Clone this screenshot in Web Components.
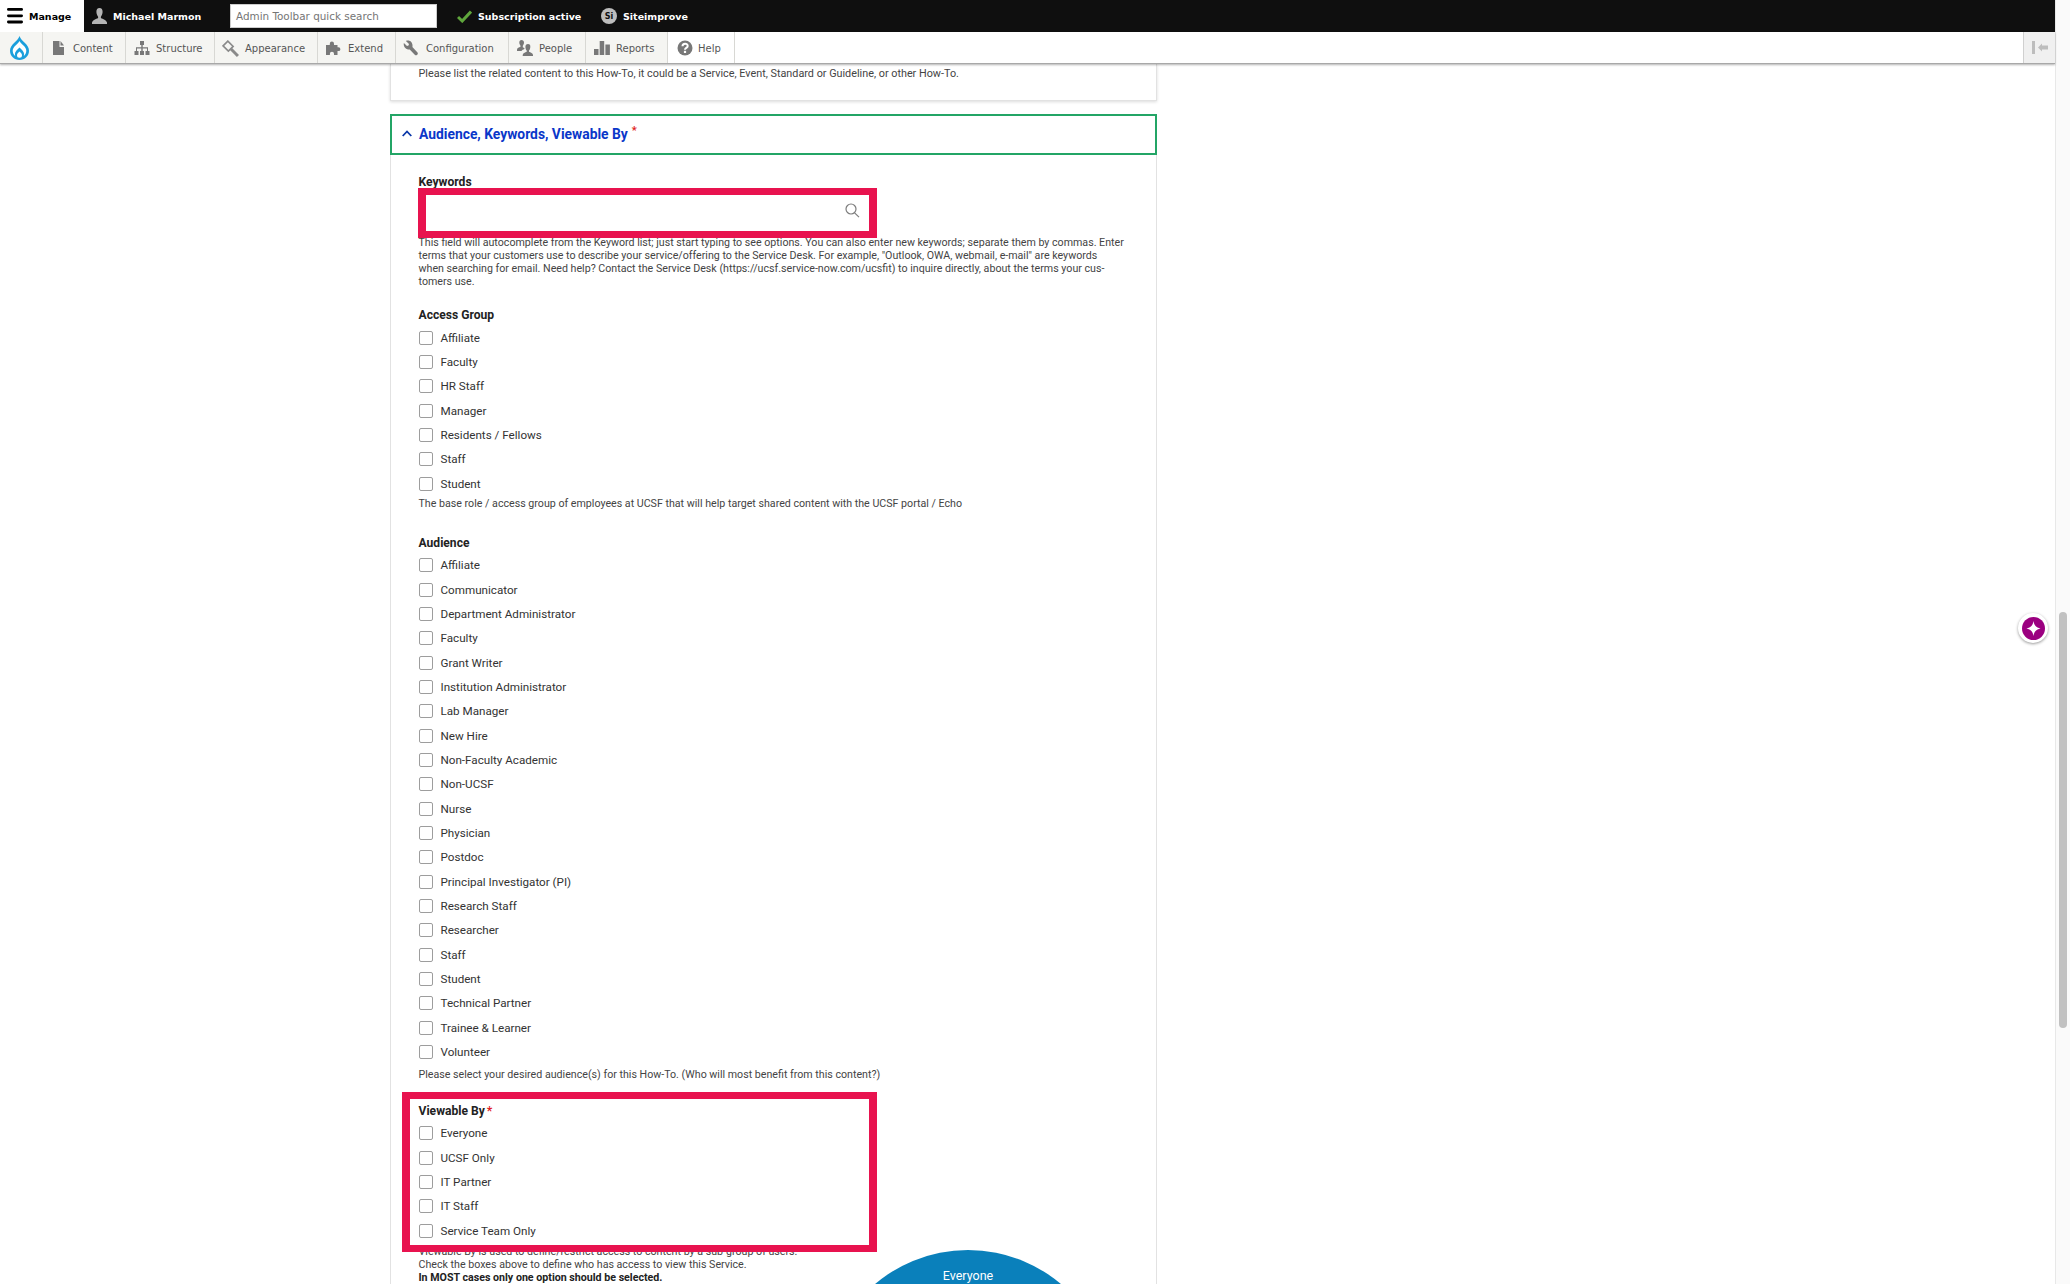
<!DOCTYPE html>
<html>
<head>
<meta charset="utf-8">
<title>Audience, Keywords, Viewable By</title>
<style>
  html, body { margin: 0; height: 100%; overflow: hidden; background: #fff; }
  body { font-family: Roboto, "Liberation Sans", sans-serif; color: #333; }
  svg { display: block; }
</style>
</head>
<body>
<app-shell>
  <admin-toolbar slot="toolbar">
    <bar-tab slot="bar" active style="--w:84px;--pad:7px">
      <svg slot="icon" width="16" height="16" viewBox="0 0 16 16" fill="#000"><rect y="0" width="16" height="2.8" rx="1.4"/><rect y="6.4" width="16" height="2.8" rx="1.4"/><rect y="12.6" width="16" height="2.8" rx="1.4"/></svg>
      Manage
    </bar-tab>
    <bar-tab slot="bar" style="--w:138px;--pad:8px">
      <svg slot="icon" width="15" height="16" viewBox="0 0 15 16" fill="#b4b4b4"><path d="M7.5 0C5.3 0 4.4 1.7 4.4 3.8c0 2 .9 4 1.7 4.9v1.2C4 11 .6 11.8 0 14.6V16h15v-1.4c-.6-2.8-4-3.6-6.1-4.7V8.7c.8-.9 1.7-2.9 1.7-4.9C10.600 1.700 9.700 0 7.500 0z"/></svg>
      Michael Marmon
    </bar-tab>
    <quick-search slot="bar">Admin Toolbar quick search</quick-search>
    <bar-tab slot="bar" style="--w:164px;--pad:20px">
      <svg slot="icon" width="15" height="13" viewBox="0 0 15 13" fill="none" stroke="#5fa63c" stroke-width="3"><path d="M1 7l4.200 4L14 1.500"/></svg>
      Subscription active
    </bar-tab>
    <bar-tab slot="bar" style="--w:120px;--pad:0px">
      <si-badge slot="icon">Si</si-badge>
      Siteimprove
    </bar-tab>

    <menu-item slot="menu" class="logo" style="--w:43px;--pad:10px;--top:0">
      <svg slot="icon" width="19" height="24" viewBox="0 0 19 24"><path fill="#1b9fdc" d="M9.500 0c1 2.900 3.100 4.700 5.200 6.800 2.500 2.400 4.300 5 4.300 8C19 20 14.800 24 9.500 24S0 20 0 14.800c0-3 1.800-5.600 4.300-8C6.400 4.700 8.500 2.900 9.500 0z"/><path fill="#fff" d="M9.500 5c1 1.800 2.200 2.800 3.700 4.200 1.900 1.800 3.100 3.500 3.100 5.600 0 2.200-1 4.100-2.600 5.300.3-.7.400-1.400.400-2.100 0-2.400-2.700-4.700-4.600-6.500-1.900 1.800-4.600 4.100-4.600 6.500 0 .7.100 1.400.4 2.100-1.600-1.200-2.600-3.100-2.600-5.300 0-2.100 1.200-3.800 3.100-5.600C7.300 7.800 8.500 6.800 9.500 5z"/><path fill="#fff" d="M9.500 15.600c1.400 1.300 2.500 2.300 2.500 3.600a2.500 2.500 0 0 1-5 0c0-1.300 1.100-2.300 2.500-3.600z"/></svg>
    </menu-item>
    <menu-item slot="menu" style="--w:83px">
      <svg slot="icon" width="16" height="16" viewBox="0 0 16 16" fill="#787878"><path d="M1 1h6.500v6H12v8H1z"/><path d="M8.500 1 12 5.500H8.500z"/></svg>
      Content
    </menu-item>
    <menu-item slot="menu" style="--w:89px;--pad:8px;--gap:6px">
      <svg slot="icon" width="16" height="16" viewBox="0 0 16 16" fill="#787878"><path d="M6 1h4v4H8.700v2.300H14V11h1.500v4h-4v-4H13V8.500H8.700V11H10v4H6v-4h1.300V8.500H3V11h1.500v4h-4v-4H2V7.300h5.300V5H6z"/></svg>
      Structure
    </menu-item>
    <menu-item slot="menu" style="--w:103px;--pad:7px;--gap:6px">
      <svg slot="icon" width="17" height="17" viewBox="0 0 16 16" fill="none" stroke="#8a8a8a"><path stroke-width="1.500" d="M1 5.500 5.500 1 10.500 6 6 10.500z"/><path stroke-width="2.800" d="M8.500 8.500 15 15"/></svg>
      Appearance
    </menu-item>
    <menu-item slot="menu" style="--w:78px;--pad:8px;--gap:6px">
      <svg slot="icon" width="16" height="16" viewBox="0 0 16 16" fill="#787878"><path d="M0 5h3.800V3.700a2.100 2.100 0 1 1 4.200 0V5h3.500v2.300h1a1.900 1.900 0 1 1 0 3.800h-1V15H8v-1.300a2 2 0 1 0-4.100 0V15H0z"/></svg>
      Extend
    </menu-item>
    <menu-item slot="menu" style="--w:113px;--pad:7px;--gap:7px">
      <svg slot="icon" width="16" height="16" viewBox="0 0 16 16" fill="#787878"><path d="M5 .5c-.8 0-1.500.1-2.100.4L6 4 5.500 5.500 4 6 .9 2.900C.1 5.400 1.700 9 5 9.500c.6.100 1.200 0 1.700-.1l5.300 5.500c1.300 1.200 3.700-.9 2.500-2.400L9.400 7C10.100 3.500 8 .5 5 .5z"/></svg>
      Configuration
    </menu-item>
    <menu-item slot="menu" style="--w:77px;--pad:8px;--gap:6px">
      <svg slot="icon" width="16" height="16" viewBox="0 0 16 16" fill="#787878"><path d="M4.500 0C3 0 2.300 1.100 2.300 2.500c0 1.300.6 2.500 1.200 3.200v1C2.200 7.400 0 7.900 0 9.700V11h4.400c.6-1 1.800-1.600 3-2.100V8.100c-.4-.2-.9-.5-1.600-.9V5.700c.6-.7 1.200-1.900 1.200-3.200C7 1.100 6 0 4.500 0z"/><path d="M11 4C9.300 4 8.400 5.300 8.400 6.900c0 1.500.7 3 1.300 3.700v1.100c-1.500.8-4 1.400-4 3.300v1h10.300v-1c0-1.900-2.500-2.500-4-3.300v-1.100c.6-.7 1.300-2.200 1.300-3.700C13.600 5.300 12.700 4 11 4z"/></svg>
      People
    </menu-item>
    <menu-item slot="menu" style="--w:82px;--pad:8px;--gap:6px">
      <svg slot="icon" width="16" height="16" viewBox="0 0 16 16" fill="#787878"><rect x="0" y="9" width="4.500" height="6"/><rect x="5.700" y="1" width="4.500" height="14"/><rect x="11.400" y="4.500" width="4.500" height="10.500"/></svg>
      Reports
    </menu-item>
    <menu-item slot="menu" class="help" style="--w:67px;--bg:#fff">
      <svg slot="icon" width="16" height="16" viewBox="0 0 16 16"><circle cx="8" cy="8" r="7.500" fill="#787878"/><path d="M5.500 6.200c0-3.300 5.200-3.300 5.200-.3 0 2-2.700 1.900-2.700 3.800" fill="none" stroke="#fff" stroke-width="2"/><rect x="6.900" y="10.800" width="2.200" height="2.200" fill="#fff"/></svg>
      Help
    </menu-item>
  </admin-toolbar>

  <form-card>
    <help-text style="--size:10.820px">Please list the related content to this How-To, it could be a Service, Event, Standard or Guideline, or other How-To.</help-text>
  </form-card>

  <form-panel heading="Audience, Keywords, Viewable By">
    <field-label>Keywords</field-label>
    <highlight-box style="--over:-1px 0 0 -.5px;--inner:0;--width:459px;--height:50px">
      <keyword-input></keyword-input>
    </highlight-box>
    <help-text style="--over:-2px 0 0 0">This field will autocomplete from the Keyword list; just start typing to see options. You can also enter new keywords; separate them by commas. Enter<br>terms that your customers use to describe your service/offering to the Service Desk. For example, "Outlook, OWA, webmail, e-mail" are keywords<br>when searching for email. Need help? Contact the Service Desk (https://ucsf.service-now.com/ucsfit) to inquire directly, about the terms your cus-<br>tomers use.</help-text>

    <field-label style="--top:20.500px">Access Group</field-label>
    <check-list>
      <check-item>Affiliate</check-item>
      <check-item>Faculty</check-item>
      <check-item>HR Staff</check-item>
      <check-item>Manager</check-item>
      <check-item>Residents / Fellows</check-item>
      <check-item>Staff</check-item>
      <check-item>Student</check-item>
    </check-list>
    <help-text style="--over:1.500px 0 0 0">The base role / access group of employees at UCSF that will help target shared content with the UCSF portal / Echo</help-text>

    <field-label style="--top:25.500px">Audience</field-label>
    <check-list>
      <check-item>Affiliate</check-item>
      <check-item>Communicator</check-item>
      <check-item>Department Administrator</check-item>
      <check-item>Faculty</check-item>
      <check-item>Grant Writer</check-item>
      <check-item>Institution Administrator</check-item>
      <check-item>Lab Manager</check-item>
      <check-item>New Hire</check-item>
      <check-item>Non-Faculty Academic</check-item>
      <check-item>Non-UCSF</check-item>
      <check-item>Nurse</check-item>
      <check-item>Physician</check-item>
      <check-item>Postdoc</check-item>
      <check-item>Principal Investigator (PI)</check-item>
      <check-item>Research Staff</check-item>
      <check-item>Researcher</check-item>
      <check-item>Staff</check-item>
      <check-item>Student</check-item>
      <check-item>Technical Partner</check-item>
      <check-item>Trainee &amp; Learner</check-item>
      <check-item>Volunteer</check-item>
    </check-list>
    <help-text style="--over:3.500px 0 0 0">Please select your desired audience(s) for this How-To. (Who will most benefit from this content?)</help-text>

    <highlight-box style="--over:11px 0 0 -16.500px;--inner:5px 0 0 8.500px;--width:475px;--height:160px">
      <field-label required>Viewable By</field-label>
      <check-list>
        <check-item>Everyone</check-item>
        <check-item>UCSF Only</check-item>
        <check-item>IT Partner</check-item>
        <check-item>IT Staff</check-item>
        <check-item>Service Team Only</check-item>
      </check-list>
    </highlight-box>
    <help-text style="--over:-7px 0 0 0">Viewable By is used to define/restrict access to content by a sub-group of users.<br>Check the boxes above to define who has access to view this Service.<br><b>In MOST cases only one option should be selected.</b></help-text>
    <venn-circle>Everyone</venn-circle>
  </form-panel>

  <assist-button slot="overlay"></assist-button>
</app-shell>

<script>
function define(name, css, html, extra) {
  const template = document.createElement('template');
  template.innerHTML = `<style>${css}</style>${html}`;
  customElements.define(name, class extends HTMLElement {
    constructor() {
      super();
      this.attachShadow({ mode: 'open' }).appendChild(template.content.cloneNode(true));
    }
    connectedCallback() {
      if (extra) extra(this);
    }
  });
}

define('app-shell', `
  :host { display: flex; height: 1284px; overflow: hidden; position: relative; }
  #main { flex: 1; min-width: 0; display: flex; flex-direction: column; }
  #page { flex: 1; min-height: 0; overflow: hidden; padding-left: 390px; }
  #scroll { flex: 0 0 15px; box-sizing: border-box; background: #fafafa; border-left: 1px solid #e8e8e8; padding: 612px 3px 0 3px; }
  #thumb { height: 416px; background: #c1c1c1; border-radius: 4px; }
`, `
  <div id="main">
    <slot name="toolbar"></slot>
    <div id="page"><slot></slot></div>
  </div>
  <div id="scroll"><div id="thumb"></div></div>
  <slot name="overlay"></slot>
`);

define('admin-toolbar', `
  :host { display: block; position: relative; z-index: 5; font-family: "DejaVu Sans", sans-serif; }
  #bar { display: flex; height: 32px; background: #0f0f0f; }
  #menu { display: flex; height: 32px; box-sizing: border-box; background: #fff; border-bottom: 1px solid #a8a8a8; box-shadow: 0 1px 2px rgba(0,0,0,.3); }
  #spacer { flex: 1; }
  #collapse { flex: 0 0 32px; box-sizing: border-box; background: #f0f0f0; border-left: 1px solid #d0d0d0; display: flex; align-items: center; justify-content: center; }
`, `
  <div id="bar"><slot name="bar"></slot></div>
  <div id="menu">
    <slot name="menu"></slot>
    <div id="spacer"></div>
    <div id="collapse"><svg width="16" height="13" viewBox="0 0 16 13" fill="#bdbdbd"><rect x="0" y="0" width="3" height="13"/><path d="M6 6.500 10 2.500v2h6v4h-6v2z"/></svg></div>
  </div>
`);

define('bar-tab', `
  :host { display: flex; align-items: center; box-sizing: border-box; flex: 0 0 var(--w, 57px); padding-left: var(--pad, 7px); gap: 6px; font-size: 9.500px; font-weight: 700; color: #fff; white-space: nowrap; }
  :host([active]) { background: #fff; color: #000; }
`, `<slot name="icon"></slot><slot></slot>`);

define('quick-search', `
  :host { display: flex; align-items: center; box-sizing: border-box; width: 207px; height: 24px; margin: 4px 0 0 8px; padding-left: 5px; background: #fff; border: 1px solid #ccc; color: #757575; font-size: 10.400px; white-space: nowrap; }
`, `<slot></slot>`);

define('si-badge', `
  :host { display: flex; align-items: center; justify-content: center; width: 16px; height: 16px; border-radius: 50%; background: #bdbdbd; color: #111; font-size: 8px; font-weight: 700; }
`, `<slot></slot>`);

define('menu-item', `
  :host { display: flex; align-items: center; box-sizing: border-box; flex: 0 0 var(--w); padding-top: var(--top, 1px); padding-left: var(--pad, 9px); gap: var(--gap, 5px); background: var(--bg, #f5f5f2); border-right: 1px solid #d8d8d4; font-size: 10px; color: #565656; white-space: nowrap; }
`, `<slot name="icon"></slot><slot></slot>`);

define('form-card', `
  :host { display: block; box-sizing: border-box; width: 767px; height: 37px; padding: 2.500px 0 0 27.500px; background: #fff; border: 1px solid #e2e2e2; border-top: 0; box-shadow: 0 1px 3px rgba(0,0,0,.14); }
`, `<slot></slot>`);

define('form-panel', `
  :host { display: block; position: relative; box-sizing: border-box; width: 767px; margin-top: 13px; }
  #head { display: flex; align-items: center; gap: 7px; box-sizing: border-box; height: 41px; padding: 0 0 2px 10px; border: 2px solid #23a566; color: #0a37c9; font-size: 13.850px; font-weight: 700; }
  #head sup { color: #e01b24; font-size: 11px; line-height: 0; margin-left: 4px; position: relative; top: 1px; vertical-align: super; }
  #body { box-sizing: border-box; height: 1200px; padding: 19.500px 0 0 27.500px; border: solid #e2e2e2; border-width: 0 1px; }
`, `
  <div id="head">
    <svg width="10" height="7" viewBox="0 0 10 7" fill="none" stroke="#0a37a8" stroke-width="1.800"><path d="M.7 6 5 1.500 9.300 6"/></svg>
    <span><span id="title"></span><sup>*</sup></span>
  </div>
  <div id="body"><slot></slot></div>
`, host => {
  host.shadowRoot.querySelector('#title').textContent = host.getAttribute('heading');
});

define('field-label', `
  :host { display: block; margin-top: var(--top, 0); font-size: 12.100px; line-height: 14px; font-weight: 700; color: #222; }
  #req { display: none; color: #e01b24; margin-left: 2px; }
  :host([required]) #req { display: inline; }
`, `<slot></slot><span id="req">*</span>`);

define('help-text', `
  :host { display: block; position: relative; margin: var(--over, 0); font-size: var(--size, 10.660px); line-height: 13px; color: #444; white-space: nowrap; }
  ::slotted(b) { color: #222; }
`, `<slot></slot>`);

define('highlight-box', `
  :host { display: block; position: relative; z-index: 2; box-sizing: border-box; width: var(--width); height: var(--height); margin: var(--over, 0); padding: var(--inner, 0); background: #fff; border: solid #e8134f; border-width: 7.500px 8px; }
`, `<slot></slot>`);

define('keyword-input', `
  :host { display: flex; align-items: center; justify-content: flex-end; box-sizing: border-box; width: 443px; height: 35px; padding: 0 9px 4px 0; background: #fff; }
`, `<svg width="15" height="15" viewBox="0 0 15 15" fill="none" stroke="#7d7d7d" stroke-width="1.200"><circle cx="6" cy="6" r="5"/><path d="M9.600 9.800 14 14.200"/></svg>`);

define('check-list', `
  :host { display: block; padding-top: 3.500px; }
`, `<slot></slot>`);

define('check-item', `
  :host { display: flex; align-items: center; height: 24.340px; gap: 8px; font-size: 11.650px; color: #333; }
  #box { box-sizing: border-box; width: 14px; height: 14px; background: #fff; border: 1px solid #9d9d9d; border-radius: 2px; }
`, `<span id="box"></span><slot></slot>`);

define('venn-circle', `
  :host { position: absolute; left: 434px; top: 1136px; display: flex; justify-content: center; box-sizing: border-box; width: 288px; height: 288px; padding-top: 19px; border-radius: 50%; background: #0a80bb; color: #fff; font-size: 12.500px; line-height: 14px; }
`, `<slot></slot>`);

define('assist-button', `
  :host { position: absolute; left: 2018px; top: 613px; z-index: 6; display: flex; align-items: center; justify-content: center; width: 30px; height: 30px; border-radius: 50%; background: #fff; box-shadow: 0 1px 3px rgba(0,0,0,.4); }
  #dot { display: flex; align-items: center; justify-content: center; width: 23px; height: 23px; border-radius: 50%; background: #9b0080; }
`, `<div id="dot"><svg width="15" height="15" viewBox="0 0 15 15" fill="#fff"><path d="M7.500 0c.8 4.600 2.400 6.200 7 7.500-4.600 1.300-6.200 2.900-7 7.500-.8-4.600-2.400-6.200-7-7.500 4.600-1.300 6.200-2.900 7-7.500z"/></svg></div>`);
</script>
</body>
</html>
